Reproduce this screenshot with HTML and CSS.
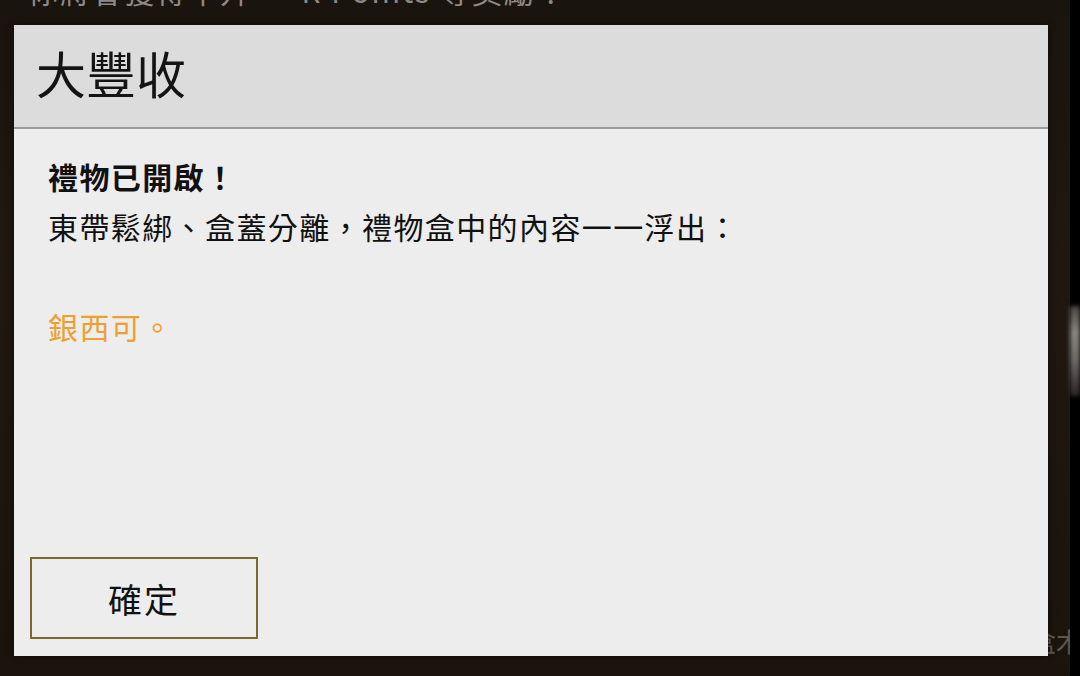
FILE: index.html
```html
<!DOCTYPE html>
<html lang="zh-Hant">
<head>
  <meta charset="UTF-8">
  <meta name="viewport" content="width=device-width, initial-scale=1.0">
  <title>大豐收</title>
  <link rel="stylesheet" href="styles.css">
</head>
<body>
<div class="scene">
  <div class="stage">
    <p class="backdrop-text">你將會獲得中升 ─ R Points 等獎勵！</p>
    <p class="backdrop-corner">盒木</p>

    <div class="dialog">
      <div class="dialog-header">
        <h1>大豐收</h1>
      </div>
      <div class="dialog-body">
        <p class="lead">禮物已開啟！</p>
        <p>東帶鬆綁、盒蓋分離，禮物盒中的內容一一浮出：</p>
        <p class="blank">&nbsp;</p>
        <p class="reward">銀西可。</p>
      </div>
      <div class="dialog-footer">
        <button type="button">確定</button>
      </div>
    </div>
  </div>
  <div class="side">
    <div class="side-pic"></div>
  </div>
</div>
</body>
</html>
```

FILE: styles.css
```css
* { box-sizing: border-box; }
body {
  margin: 0;
  background: #000;
  font-family: "Noto Sans CJK TC", "Noto Sans", sans-serif;
  overflow: hidden;
}
.scene {
  display: flex;
  width: 1080px;
  height: 676px;
}
.stage {
  position: relative;
  width: 1070px;
  height: 676px;
  background: linear-gradient(#1a140e, #201810 40%, #1b140d);
  overflow: hidden;
}
.backdrop-text {
  margin: -25px 0 0 28px;
  font-family: "Noto Sans CJK TC", serif;
  font-size: 30px;
  line-height: 30px;
  letter-spacing: 2px;
  color: #8d8a86;
}
.backdrop-corner {
  position: absolute;
  right: -12px;
  top: 622px;
  margin: 0;
  font-size: 26px;
  color: #5d5750;
}
.side {
  width: 10px;
  background: #000;
}
.side-pic {
  margin-top: 306px;
  height: 90px;
  background: linear-gradient(#4a4440, #8a8680 30%, #6e6a68 60%, #2b2224);
  filter: blur(2px);
}

/* fenêtre */
.dialog {
  position: absolute;
  left: 14px;
  top: 25px;
  width: 1034px;
  height: 631px;
  display: flex;
  flex-direction: column;
  background: #ededed;
  box-shadow: 0 0 6px rgba(0,0,0,0.5);
}
.dialog-header {
  height: 104px;
  padding: 0 0 8px 22px;
  display: flex;
  align-items: center;
  background: #dcdcdc;
  border-bottom: 2px solid #9b9b9b;
}
.dialog-header h1 {
  margin: 0;
  font-size: 50px;
  font-weight: 400;
  line-height: 1;
  color: #141414;
}
.dialog-body {
  flex: 1;
  padding: 22px 34px;
}
.dialog-body p {
  margin: 0;
  font-size: 30px;
  line-height: 50px;
  letter-spacing: 1.4px;
  color: #111;
}
.dialog-body .lead { font-weight: 700; }
.dialog-body .reward { color: #eea02f; }
.dialog-footer {
  padding: 0 0 17px 16px;
}
button {
  width: 228px;
  height: 82px;
  background: #ededed;
  border: 2px solid #7b6a2f;
  font-family: inherit;
  font-size: 34px;
  color: #111;
  letter-spacing: 2px;
  cursor: pointer;
}
```
